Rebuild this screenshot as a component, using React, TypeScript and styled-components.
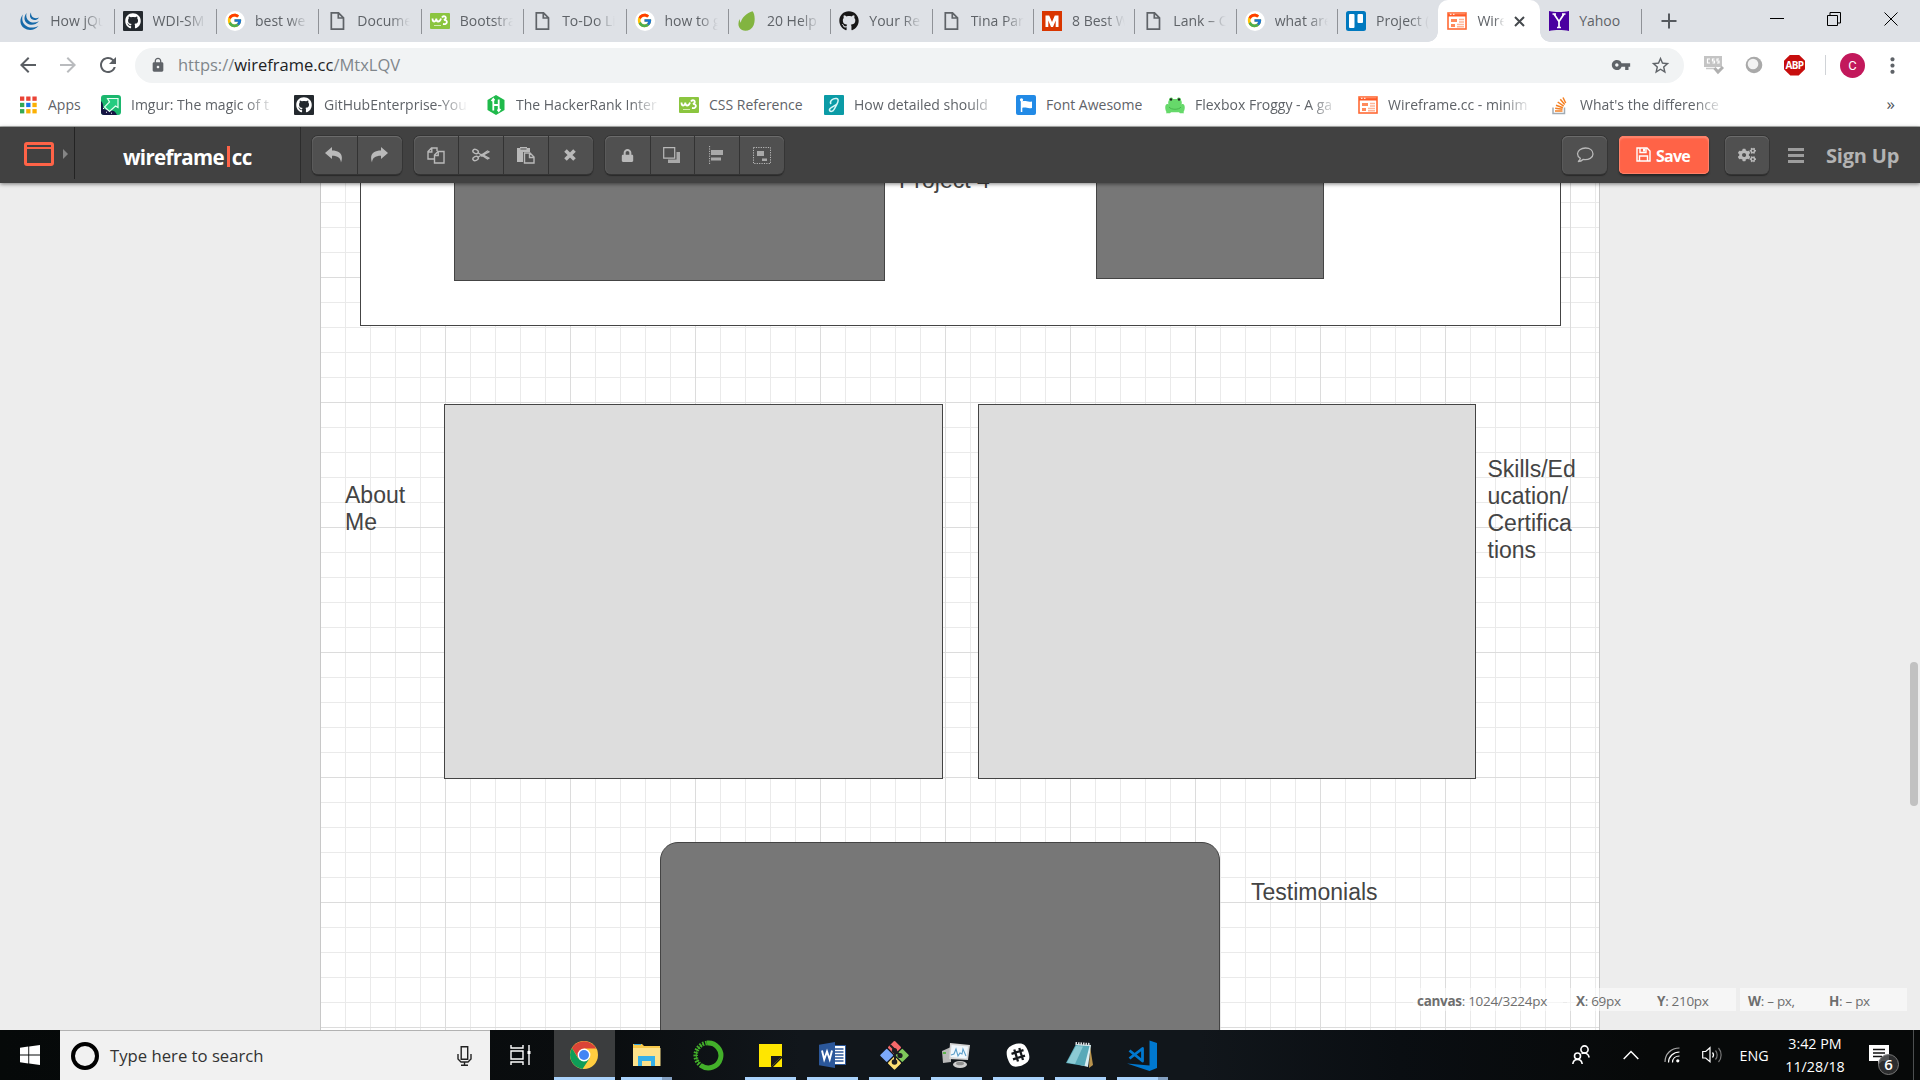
import React from "react";
import styled, { createGlobalStyle, css } from "styled-components";
import { FcGoogle } from "react-icons/fc";
import { FaGithub, FaCogs, FaLock } from "react-icons/fa";
import { MdArrowBack, MdArrowForward, MdRefresh, MdLock, MdVpnKey, MdStarBorder, MdMoreVert } from "react-icons/md";

const ui = `"Segoe UI", "Open Sans", "Noto Sans", sans-serif`;

const Global = createGlobalStyle`
  * { box-sizing: border-box; }
  body { margin: 0; overflow: hidden; font-family: ${ui}; }
  svg { display: block; flex: none; }
`;

const Screen = styled.div`
  width: 1920px;
  height: 1080px;
  display: flex;
  flex-direction: column;
  overflow: hidden;
  background: #ededed;
`;

/* ---------- browser tabs ---------- */
const TabStrip = styled.div`
  height: 42px;
  flex: none;
  display: flex;
  background: #dee1e6;
  padding-left: 11.2px;
`;
const Tab = styled.div<{ $active?: boolean; $line?: boolean; $w?: number }>`
  width: ${(p) => p.$w ?? 101.8}px;
  flex: none;
  height: 42px;
  display: flex;
  align-items: center;
  padding-left: 9px;
  position: relative;
  ${(p) =>
    p.$line &&
    css`
      &::after {
        content: "";
        position: absolute;
        right: -1px;
        top: 9px;
        width: 1px;
        height: 25px;
        background: #8f9297;
      }
    `}
  ${(p) =>
    p.$active &&
    css`
      background: #fff;
      border-radius: 10px 10px 0 0;
      &::before,
      &::after {
        content: "";
        position: absolute;
        bottom: 0;
        width: 10px;
        height: 10px;
      }
      &::before {
        left: -10px;
        background: radial-gradient(circle at 0 0, transparent 9.5px, #fff 10px);
      }
      &::after {
        right: -10px;
        background: radial-gradient(circle at 100% 0, transparent 9.5px, #fff 10px);
      }
    `}
`;
const IconSlot = styled.span`
  width: 20px;
  height: 20px;
  flex: none;
  display: flex;
  align-items: center;
  justify-content: center;
`;
const TabTitle = styled.span<{ $w?: number; $plain?: boolean }>`
  width: ${(p) => p.$w ?? 54}px;
  margin-left: 10px;
  overflow: hidden;
  white-space: nowrap;
  font-size: 14px;
  line-height: 20px;
  color: #5f6368;
  ${(p) => !p.$plain && "mask-image: linear-gradient(to right, #000 62%, transparent 98%);"}
`;
const CloseTab = styled.span`
  width: 11px;
  height: 11px;
  margin-left: 9px;
`;
const NewTab = styled.div`
  width: 56px;
  display: flex;
  align-items: center;
  justify-content: center;
`;
const WindowButtons = styled.div`
  margin-left: auto;
  display: flex;
  height: 37px;
  align-items: center;
  gap: 43px;
  padding-right: 22px;
`;

/* ---------- address row ---------- */
const AddressRow = styled.div`
  height: 44px;
  flex: none;
  display: flex;
  align-items: center;
  background: #fff;
  padding: 2px 0 0 16px;
`;
const NavIcons = styled.div`
  display: flex;
  gap: 16px;
  width: 119px;
  svg { width: 24px; height: 24px; }
`;
const Omnibox = styled.div`
  width: 1549px;
  height: 35px;
  border-radius: 18px;
  background: #f1f3f4;
  display: flex;
  align-items: center;
  padding: 0 13px 0 15px;
`;
const Url = styled.span`
  flex: 1;
  margin-left: 12px;
  font-size: 16.5px;
  line-height: 22px;
  color: #80868b;
  b { font-weight: 400; color: #202124; }
`;
const OmniActions = styled.div`
  display: flex;
  gap: 19px;
`;
const Extensions = styled.div`
  display: flex;
  align-items: center;
  margin-left: 20px;
  gap: 20px;
`;
const Abp = styled.span`
  width: 21px;
  height: 21px;
  background: #c70d0d;
  clip-path: polygon(30% 0, 70% 0, 100% 30%, 100% 70%, 70% 100%, 30% 100%, 0 70%, 0 30%);
  color: #fff;
  font: 700 10px/21px ${ui};
  letter-spacing: -0.6px;
  text-align: center;
`;
const Rule = styled.span`
  width: 1px;
  height: 20px;
  margin: 0 -6px 0 0;
  background: #d0d3d7;
`;
const Avatar = styled.span`
  width: 25px;
  height: 25px;
  border-radius: 50%;
  background: #c2185b;
  color: #fff;
  font: 400 13px/25px Roboto, sans-serif;
  text-align: center;
`;
const MenuDots = styled(MdMoreVert)`
  margin-left: -5px;
`;

/* ---------- bookmarks ---------- */
const Bookmarks = styled.div`
  height: 41px;
  flex: none;
  display: flex;
  align-items: center;
  background: #fff;
  border-bottom: 1px solid #b4b7b4;
  padding: 0 0 2px 18px;
`;
const Bookmark = styled.div<{ $w: number }>`
  width: ${(p) => p.$w}px;
  flex: none;
  display: flex;
  align-items: center;
`;
const BookmarkText = styled.span<{ $fade?: boolean }>`
  margin-left: 10px;
  max-width: 143px;
  overflow: hidden;
  white-space: nowrap;
  font-size: 14px;
  line-height: 20px;
  color: #5f6368;
  ${(p) => p.$fade && "mask-image: linear-gradient(to right, #000 114px, transparent 144px);"}
`;
const More = styled.span`
  margin: -4px 25px 0 auto;
  font-size: 17px;
  color: #50545a;
`;

/* ---------- wireframe header ---------- */
const Header = styled.header`
  height: 56px;
  flex: none;
  display: flex;
  align-items: center;
  background: #414141;
  position: relative;
  z-index: 3;
  box-shadow: 0 1px 4px rgba(0, 0, 0, 0.5);
`;
const LogoCell = styled.div`
  width: 75px;
  height: 52px;
  align-self: flex-start;
  border-right: 1px solid #232323;
  display: flex;
  align-items: center;
  padding: 2px 0 0 23.5px;
  gap: 9px;
`;
const Brand = styled.div`
  width: 226px;
  height: 56px;
  border-right: 1px solid #2c2c2c;
  display: flex;
  align-items: center;
  padding: 3px 0 0 48px;
  color: #fff;
  font-size: 20.5px;
  font-weight: 700;
  letter-spacing: -0.7px;
  line-height: 26px;
`;
const BrandBar = styled.i`
  width: 3px;
  height: 21px;
  margin: 0 2px 0 3px;
  background: #ff6347;
`;
const Group = styled.div<{ $left: number }>`
  margin-left: ${(p) => p.$left}px;
  height: 38px;
  display: flex;
  border-radius: 6px;
  background: #505050;
  box-shadow: inset 0 1px 0 #6b6b6b, inset 1px 0 0 #5a5a5a, 0 0 0 1px #353535, 0 2px 1px #2a2a2a;
`;
const ToolButton = styled.button<{ $w?: number }>`
  width: ${(p) => p.$w ?? 44.8}px;
  height: 38px;
  padding: 0;
  border: 0;
  background: none;
  color: #b9b9b9;
  display: flex;
  align-items: center;
  justify-content: center;
  & + & { border-left: 1px solid #333; padding-right: 1px; }
`;
const Save = styled.button`
  width: 90px;
  height: 38px;
  margin-left: 12px;
  padding: 2px 2px 0 0;
  border: 0;
  border-radius: 5px;
  background: #ff6347;
  box-shadow: inset 0 0 0 1px #ff8068, inset 0 2px 2px #ff8e78, 0 2px 2px #252525;
  display: flex;
  align-items: center;
  justify-content: center;
  gap: 5px;
  color: #fff;
  font: 700 16px/20px ${ui};
  letter-spacing: -0.7px;
  svg { margin-top: -3px; }
`;
const SignUp = styled.span`
  width: 94px;
  margin: 2px 0 0 22px;
  color: #b3b3b3;
  font-size: 20px;
  font-weight: 700;
  letter-spacing: -0.2px;
  line-height: 24px;
`;
const Burger = styled.span`
  width: 16px;
  height: 15px;
  margin-left: 19px;
  border-top: 3px solid #9d9d9d;
  border-bottom: 3px solid #9d9d9d;
  display: flex;
  align-items: center;
  &::before { content: ""; width: 16px; height: 3px; background: #9d9d9d; }
`;
const Spacer = styled.span`
  flex: 1;
`;

/* ---------- canvas ---------- */
const Workspace = styled.main`
  flex: 1;
  position: relative;
  display: flex;
  justify-content: center;
  overflow: hidden;
  background: #ededed;
`;
const Page = styled.section`
  width: 1280px;
  height: 100%;
  position: relative;
  background-color: #fff;
  background-image: linear-gradient(to right, #dcdcdc 1px, transparent 1px),
    linear-gradient(to bottom, #dcdcdc 1px, transparent 1px),
    linear-gradient(to right, #eaeaea 1px, transparent 1px),
    linear-gradient(to bottom, #eaeaea 1px, transparent 1px);
  background-size: 125px 125px, 125px 125px, 25px 25px, 25px 25px;
  background-position: 0 94px, 0 94px, 0 19px, 0 19px;
  box-shadow: inset 1px 0 0 #c8c8c8, inset -1px 0 0 #c8c8c8;
`;
const Shape = styled.div<{ $x: number; $y: number; $w: number; $h: number; $fill: string; $r?: number }>`
  position: absolute;
  left: ${(p) => p.$x}px;
  top: ${(p) => p.$y}px;
  width: ${(p) => p.$w}px;
  height: ${(p) => p.$h}px;
  background: ${(p) => p.$fill};
  border: 1px solid #444;
  border-radius: ${(p) => p.$r ?? 0}px;
`;
const Note = styled.div<{ $x: number; $y: number; $w: number }>`
  position: absolute;
  left: ${(p) => p.$x}px;
  top: ${(p) => p.$y}px;
  width: ${(p) => p.$w}px;
  color: #444;
  font: 23px/27px Arial, "Liberation Sans", sans-serif;
  white-space: pre;
`;
const ScrollThumb = styled.div`
  position: absolute;
  right: 2px;
  top: 479px;
  width: 8px;
  height: 144px;
  border-radius: 4px;
  background: #c1c1c1;
`;
const StatusBar = styled.div`
  position: absolute;
  right: 13px;
  bottom: 19px;
  height: 23px;
  display: flex;
  gap: 4px;
  color: #6e6e6e;
  font-size: 13.5px;
  letter-spacing: -0.3px;
  line-height: 27px;
`;
const StatusBox = styled.div<{ $w: number; $pad: number }>`
  width: ${(p) => p.$w}px;
  padding-left: ${(p) => p.$pad}px;
  display: flex;
  white-space: nowrap;
  background: rgba(255, 255, 255, 0.5);
`;
const Stat = styled.span<{ $w?: number }>`
  width: ${(p) => (p.$w ? p.$w + "px" : "auto")};
`;

/* ---------- taskbar ---------- */
const Taskbar = styled.footer`
  height: 50px;
  flex: none;
  display: flex;
  background: linear-gradient(to right, #060909 0, #0a0d0f 600px, #11161b 800px, #11161b 1200px, #0a0e12 1400px, #070909 1650px);
  color: #fff;
`;
const Start = styled.div`
  width: 60px;
  display: flex;
  align-items: center;
  justify-content: center;
`;
const Search = styled.div`
  width: 430px;
  background: #f1f1f1;
  border-top: 1px solid #b2b2b2;
  display: flex;
  align-items: center;
  padding: 0 18px 0 11px;
`;
const Cortana = styled.span`
  width: 28px;
  height: 28px;
  border-radius: 50%;
  border: 4px solid #000;
`;
const SearchText = styled.span`
  flex: 1;
  margin-left: 11px;
  font-size: 16.7px;
  color: #333;
`;
const TaskView = styled.div`
  width: 64px;
  display: flex;
  align-items: center;
  padding-left: 19.5px;
`;
const Task = styled.div<{ $state?: "active" | "open" | "stack" }>`
  width: 62px;
  display: flex;
  align-items: center;
  justify-content: center;
  padding-right: 2px;
  position: relative;
  ${(p) =>
    p.$state === "active" &&
    css`
      background: linear-gradient(to right, #3b3d3e 61px, transparent 61px);
    `}
  ${(p) =>
    p.$state &&
    css`
      &::after {
        content: "";
        position: absolute;
        bottom: 0;
        height: 3px;
        left: ${p.$state === "active" ? 0 : 5}px;
        width: ${p.$state === "active" ? 61 : 51}px;
        background: ${p.$state === "stack"
          ? "linear-gradient(to right, #a9d2fb 41px, #839fc0 41px)"
          : "#a9d2fb"};
      }
    `}
`;
const Tray = styled.div`
  margin-left: auto;
  display: flex;
  align-items: center;
  padding-right: 6px;
`;
const TrayItem = styled.div<{ $w: number; $shift?: number }>`
  width: ${(p) => p.$w}px;
  padding-left: ${(p) => p.$shift ?? 0}px;
  display: flex;
  justify-content: center;
  text-align: center;
  font-size: 14.3px;
  line-height: 23px;
`;
const Notice = styled.div`
  width: 60px;
  height: 50px;
  position: relative;
  border-right: 1px solid #4c4f50;
  display: flex;
  align-items: center;
  padding-left: 15px;
`;
const Count = styled.span`
  position: absolute;
  left: 24px;
  top: 24px;
  width: 21px;
  height: 21px;
  border: 1px solid #777;
  border-radius: 50%;
  background: rgba(50, 52, 53, 0.85);
  font: 600 15px/18px ${ui};
  text-align: center;
`;

/* ---------- favicons ---------- */
const JQuery = () => (
  <svg width="20" height="20" viewBox="0 0 20 20" fill="#1669a8">
    <path d="M2.800 3.500C-1 9 0 14 4 17c4.500 3 10.500 2.500 14.500-2C13 17.500 8 17 5 14 2 11 1.800 7.500 2.800 3.500z" />
    <path d="M6.500 2C3.500 6 4 10 7 12.300c3.500 2.500 8.500 2 12-2C15 12 11.500 12 9 10 6.500 8 5.800 5.500 6.500 2z" />
    <path d="M11 1.500c-1.800 3-1 5.500 1 6.800 2.300 1.400 5 .9 7-1.800-2.200 1-4 1-5.700 0C11.700 5.500 10.900 4 11 1.500z" />
  </svg>
);
const GitHubBox = () => (
  <svg width="20" height="20" viewBox="0 0 20 20">
    <rect width="20" height="20" rx="1" fill="#24292e" />
    <FaGithub x="2" y="2" width="16" height="16" color="#fff" />
  </svg>
);
const GoogleDot = () => (
  <svg width="20" height="20" viewBox="0 0 20 20">
    <circle cx="10" cy="10" r="10" fill="#fff" />
    <FcGoogle x="1.500" y="1.500" width="17" height="17" />
  </svg>
);
const Doc = () => (
  <svg width="20" height="20" viewBox="0 0 20 20" fill="none" stroke="#5f6368" strokeWidth="1.700">
    <path d="M4.300 1.800h7.200l5 5v11.400H4.300zM11.300 2v5h5" />
  </svg>
);
const W3 = () => (
  <svg width="20" height="20" viewBox="0 0 20 20">
    <rect y="2" width="20" height="16" rx="1" fill="#8bc53f" />
    <path d="M2.500 7.500c0 4 3.500 4 3.800 0 0 4 3.500 4 4.700 0M12 6.500c1-2 5-1.500 3.500 1.500l-1.500 1c4-.5 4 5-1 4" fill="none" stroke="#fff" strokeWidth="1.800" />
    <path d="M4 14.500h7" stroke="#d5ecb5" strokeWidth="1" />
  </svg>
);
const Envato = () => (
  <svg width="20" height="20" viewBox="0 0 20 20">
    <path d="M15.500.3c2.300 2 3 9.700 1 14.200-2 4.500-7.500 6.500-11.500 4.500C.5 16.500 1 12 2.500 8c.4 1.500.5 2.500 1.300 3.700C4.500 7 10 1.500 15.500.3z" fill="#82b440" />
  </svg>
);
const MBox = () => (
  <svg width="20" height="20" viewBox="0 0 20 20">
    <rect width="20" height="20" fill="#d93600" />
    <path d="M3.500 16V4.500h3.700L10 11l2.800-6.500h3.700V16h-2.800V9.500L11 16H9L6.300 9.500V16z" fill="#fff" />
  </svg>
);
const Trello = () => (
  <svg width="20" height="20" viewBox="0 0 20 20">
    <rect width="20" height="20" rx="2.500" fill="#0079bf" />
    <rect x="3" y="3" width="5.500" height="14" rx="1" fill="#fff" />
    <rect x="11.500" y="3" width="5.500" height="9" rx="1" fill="#fff" />
  </svg>
);
const WireIcon = () => (
  <svg width="20" height="20" viewBox="0 0 20 20">
    <rect x="1" y="2" width="18" height="16" fill="#fff" stroke="#ff6a35" strokeWidth="1.600" />
    <path d="M1 4.300h18" stroke="#ff5a26" strokeWidth="2.400" />
    <path d="M3 3.300h1.500M6 3.300h1.500" stroke="#fff" strokeWidth="1" />
    <path d="M4 8h6v3H4zM4 13h4v3H4z" fill="#ff8a5c" />
    <path d="M12 8.500h5M12 11h5M10 13.500h7M10 15.800h7" stroke="#ffb598" strokeWidth="1.400" />
  </svg>
);
const YahooIcon = () => (
  <svg width="20" height="20" viewBox="0 0 20 20">
    <path d="M0 0c6 1.300 14 1.300 20 0v20c-6-1.300-14-1.300-20 0z" fill="#4a00a0" />
    <path d="M5 3l5 7.500L15 3M10 10v6.500M3.500 3H7M13 3h3.500M8 16.500h4" fill="none" stroke="#fff" strokeWidth="1.700" />
  </svg>
);
const AppsGrid = () => (
  <svg width="20" height="20" viewBox="0 0 20 20">
    {["#ea4335", "#ea4335", "#ea4335", "#34a853", "#1a73e8", "#fbb003", "#34a853", "#fbb003", "#fbb003"].map((c, i) => (
      <rect key={i} x={2 + (i % 3) * 6.2} y={1.500 + Math.floor(i / 3) * 6.3} width="4.300" height="4.300" fill={c} />
    ))}
  </svg>
);
const Imgur = () => (
  <svg width="20" height="20" viewBox="0 0 20 20">
    <rect width="20" height="20" rx="3" fill="#1bb76e" />
    <path d="M0 6c4 4 0 8 6 9 5 1 7-1 10 5H3a3 3 0 01-3-3z" fill="#171544" />
    <path d="M6.500 3.500h10.500v9l-2.500-1.500-6 5.500-5-4.500 5-5z" fill="#25cc80" stroke="#e7fff3" strokeWidth="1.200" />
    <path d="M2 13l1 1M5 17l1 .5M10 18l1 .3" stroke="#fff" strokeWidth="1" />
  </svg>
);
const Hacker = () => (
  <svg width="20" height="20" viewBox="0 0 20 20">
    <path d="M10 0l8.500 5v10L10 20l-8.500-5V5z" fill="#1fba4b" />
    <path d="M7.300 4.500v11M12.700 4.500v11M7 10h6M5.500 6l1.800-2 1.200 1.500M11.500 14.500l1.200 1.500 1.800-2" fill="none" stroke="#fff" strokeWidth="1.800" />
  </svg>
);
const Justin = () => (
  <svg width="20" height="20" viewBox="0 0 20 20">
    <rect width="20" height="20" rx="1" fill="#0b9ba6" />
    <path d="M7 9c-2-3 2-6 5.500-5.500 4 .7-.5 7.500-2.500 11-1 2.500-5 2.500-4.500 0C6 12.500 11 11 13.500 8.500" fill="none" stroke="#d9f6f7" strokeWidth="1.500" />
  </svg>
);
const Flag = () => (
  <svg width="20" height="20" viewBox="0 0 20 20">
    <rect width="20" height="20" rx="2" fill="#228ae6" />
    <circle cx="5.500" cy="4.800" r="1.600" fill="#fff" />
    <path d="M4.800 5h1.500v12H4.800zM6 6.500c4-1.500 5 1 10 0V13c-5 1-6-1.500-10 0z" fill="#fff" />
  </svg>
);
const Frog = () => (
  <svg width="20" height="20" viewBox="0 0 20 20">
    <path d="M4 5C4 2 7.500 2 8 4h4c.5-2 4-2 4 1 1 2 1 3 .5 4.500 3-2 4.500 3 2 7.500l.5 1.200h-4l-1-1H6l-1 1H1L1.500 17c-2.500-4.500-1-9.500 2-7.500C3 8 3 7 4 5z" fill="#66d96a" />
    <circle cx="6" cy="4.500" r="1.200" fill="#222" />
    <circle cx="14" cy="4.500" r="1.200" fill="#222" />
    <path d="M4 12c2 3 10 3 12 0" fill="none" stroke="#47b84e" />
  </svg>
);
const Stack = () => (
  <svg width="20" height="20" viewBox="0 0 20 20" fill="none">
    <path d="M3 12.500v6h11.500v-6" stroke="#a2abb3" strokeWidth="1.500" />
    <path d="M5 16h7.500M5.200 13.300l7.300.9M6 10.300l6.900 2.500M7.700 7l6 4.200M10.300 4.300l4.400 5.300M13 2.500l2.700 5.500" stroke="#f48024" strokeWidth="1.500" />
  </svg>
);

/* ---------- toolbar glyphs ---------- */
const Undo = ({ flip }: { flip?: boolean }) => (
  <svg width="18" height="16" viewBox="0 0 18 16" fill="#b9b9b9">
    <path transform={flip ? "translate(18 0) scale(-1 1)" : undefined} d="M0 6L7 0v3.500c7 0 12 3.500 9 12C15.500 11 13 8.800 7 8.800V12z" />
  </svg>
);
const CopyIcon = () => (
  <svg width="18" height="17" viewBox="0 0 18 17" fill="none" stroke="#b9b9b9" strokeWidth="1.400">
    <path d="M7.500 12H1V4.500L4.500 1H10v3M4.800 1v4H1M7.500 8L11 4.500h6V16H7.500zM11.200 4.500v4H7.500" />
  </svg>
);
const CutIcon = () => (
  <svg width="18" height="14" viewBox="0 0 18 14" fill="none" stroke="#b9b9b9" strokeWidth="1.500">
    <ellipse cx="3.600" cy="3.500" rx="2.800" ry="2" transform="rotate(20 3.600 3.500)" />
    <ellipse cx="3.600" cy="10.500" rx="2.800" ry="2" transform="rotate(-20 3.600 10.500)" />
    <path d="M6 4.700L15.500 11l1.500-.8L9.500 6M6 9.300L15.500 3l1.500.8L9 8.300" strokeWidth="1.200" />
  </svg>
);
const PasteIcon = () => (
  <svg width="18" height="17" viewBox="0 0 18 17">
    <path d="M0 1h3V0h7v1h3v4H6v10H0z" fill="#b9b9b9" />
    <path d="M3.500 2h6" stroke="#505050" />
    <path d="M7.500 6H13l4 4v6H7.500zM12.500 6v4.500H17" fill="#505050" stroke="#b9b9b9" strokeWidth="1.400" />
  </svg>
);
const CloseX = () => (
  <svg width="12" height="12" viewBox="0 0 12 12">
    <path d="M1.500 1.500l9 9M10.500 1.500l-9 9" stroke="#b9b9b9" strokeWidth="3.600" />
  </svg>
);
const Layers = () => (
  <svg width="18" height="17" viewBox="0 0 18 17">
    <path d="M5 16h12V5h-3.500v7.500H5z" fill="#a9a9a9" />
    <path d="M.7.700h11v10.500H.7z" fill="none" stroke="#b9b9b9" strokeWidth="1.200" />
  </svg>
);
const Align = () => (
  <svg width="16" height="18" viewBox="0 0 16 18">
    <path d="M.6 0v18" stroke="#b9b9b9" strokeDasharray="1.200 1.200" />
    <path d="M2 4h12v5H2zM2 11.500h10v3H2z" fill="#a9a9a9" />
  </svg>
);
const GroupIcon = () => (
  <svg width="18" height="17" viewBox="0 0 18 17">
    <path d="M.5.500h17v16H.5z" fill="none" stroke="#b9b9b9" strokeDasharray="1.200 1.200" />
    <path d="M4 4h7v5H4zM9 11.500h5V14H9z" fill="#a9a9a9" />
  </svg>
);
const Bubble = () => (
  <svg width="18" height="16" viewBox="0 0 18 16" fill="none" stroke="#b9b9b9" strokeWidth="1.300">
    <path d="M9.500 1C5 1 1.500 3.500 1.500 6.800c0 2 1.200 3.500 2.800 4.500-.3 1.500-1 2.500-2.300 3.200 2.500 0 4-.8 5-2 6 .8 10-2 10-5.500C17 3.500 14 1 9.500 1z" />
  </svg>
);
const Floppy = () => (
  <svg width="15" height="15" viewBox="0 0 15 15" fill="none" stroke="#fff" strokeWidth="1.400">
    <path d="M1 1h10l3 3v10H1zM4 1v4.500h6V1M3.500 14V9h8v5" />
    <path d="M8 1.500v3" strokeWidth="2" />
  </svg>
);

/* ---------- taskbar icons ---------- */
const Chrome = () => (
  <svg width="28" height="28" viewBox="0 0 28 28">
    <circle cx="14" cy="14" r="14" fill="#ffcd40" />
    <path d="M14 14L8.500 17.200 1.900 7A14 14 0 0126.100 7.500H14z" fill="#db4437" />
    <path d="M1.900 7A14 14 0 0012.500 27.900L19.500 17.500 14 14 8.300 17.500z" fill="#0f9d58" />
    <circle cx="14" cy="14" r="6.400" fill="#fff" />
    <circle cx="14" cy="14" r="5" fill="#4285f4" />
  </svg>
);
const Explorer = () => (
  <svg width="29" height="24" viewBox="0 0 29 24">
    <path d="M1 1h9l2 2h16v20H1z" fill="#f7c84a" />
    <path d="M1 5h27.500v18H1z" fill="#fde28b" />
    <path d="M6 13h17v10h-4v-5h-9v5H6z" fill="#35b0e8" />
    <path d="M2 1.500h7" stroke="#3aa7de" strokeWidth="1" />
  </svg>
);
const Conda = () => (
  <svg width="31" height="31" viewBox="0 0 31 31" fill="none" stroke="#43b02a">
    <path d="M14 3a12.500 12.500 0 11-6 22.500" strokeWidth="5" />
    <path d="M8.500 26A12.500 12.500 0 0114 3" strokeWidth="4.500" strokeDasharray="1.600 1.300" />
    <path d="M6 23A12 12 0 0111 4" strokeWidth="1" />
  </svg>
);
const Sticky = () => (
  <svg width="23" height="23" viewBox="0 0 23 23">
    <path d="M0 0h23v12L12 23H0z" fill="#ffe600" />
    <path d="M12 23V12h11z" fill="#1a1a1a" />
    <path d="M14 23h9v-9z" fill="#ffe600" />
  </svg>
);
const Word = () => (
  <svg width="27" height="26" viewBox="0 0 27 26">
    <path d="M14 3.500h12.500v19H14z" fill="#fff" stroke="#2b579a" />
    <path d="M16 7h8.500M16 10h8.500M16 13h8.500M16 16h8.500M16 19h8.500" stroke="#2b579a" strokeWidth="1.500" />
    <path d="M0 2.800L16 0v26L0 23.200z" fill="#2b579a" />
    <path d="M3 8.500l2.200 9L8 9.500l2.700 8L13 8.500" fill="none" stroke="#fff" strokeWidth="1.900" />
  </svg>
);
const Git = () => (
  <svg width="31" height="31" viewBox="0 0 31 31">
    <g transform="rotate(45 15.500 15.500)">
      <rect x="5" y="5" width="9.800" height="9.800" rx="1" fill="#f5696b" />
      <rect x="16" y="5" width="9.800" height="9.800" rx="1" fill="#7fc95b" />
      <rect x="5" y="16" width="9.800" height="9.800" rx="1" fill="#7ba9fb" />
      <rect x="16" y="16" width="9.800" height="9.800" rx="1" fill="#ffdf73" />
    </g>
    <path d="M11 5l5 5v12M16 10l5 5.500" stroke="#1d1d20" strokeWidth="2" fill="none" />
    <circle cx="15.500" cy="10.500" r="2.600" fill="#1d1d20" />
    <circle cx="21" cy="15.500" r="2.600" fill="#1d1d20" />
    <circle cx="15.500" cy="22" r="2.800" fill="#1d1d20" />
  </svg>
);
const Monitor = () => (
  <svg width="29" height="27" viewBox="0 0 29 27">
    <path d="M0 9l9-4v15l-8 1z" fill="#b9b9b9" />
    <path d="M1 10h3v2H1z" fill="#5db44a" />
    <path d="M8 1l20 2-2 15-19-1z" fill="#d5d5d5" />
    <path d="M9.500 3l16.500 1.500-1.500 12L8.500 15z" fill="#f1f8fd" />
    <path d="M9 13l3-1 2-5 2 7 2-3 2 1 1-5 3 7" fill="none" stroke="#5d9fca" strokeWidth="1.100" />
    <ellipse cx="18" cy="22.500" rx="7" ry="3.500" fill="#cfcfcf" />
    <ellipse cx="18" cy="21.500" rx="4" ry="1.800" fill="#8f8f8f" />
  </svg>
);
const Slack = () => (
  <svg width="24" height="24" viewBox="0 0 24 24">
    <path d="M8 1.500C16-1 19.500 1 22 8c3 8 1 11.500-6 14.500-8 2.500-11.500 1-14-6S0 4.500 8 1.500z" fill="#fff" />
    <path d="M8.300 6.500l3.700 12M13.300 5l3.700 12M5.500 10.800l12-3.700M7 16.300l12-3.700" stroke="#14171b" strokeWidth="2.300" />
  </svg>
);
const Notepad = () => (
  <svg width="28" height="27" viewBox="0 0 28 27">
    <path d="M24 4l3 19-4 3z" fill="#b9934d" />
    <path d="M10 2l15 1-3 22-8-2z" fill="#d9eef2" />
    <path d="M9.500 3l14 1-5 20L0 21z" fill="#58a9b8" />
    <path d="M10 4l7 .5L9 22l-8-1.500z" fill="#8ccbd5" />
    <path d="M9.500 1.500l15 1" stroke="#d8dde0" strokeWidth="3" strokeDasharray="1.500 1" />
  </svg>
);
const Code = () => (
  <svg width="31" height="31" viewBox="0 0 31 31">
    <path d="M22.500.500L30 3v25l-7.500 3L0 23.500l22.500 2z" fill="#0078d0" />
    <path d="M2.500 10.500l13 10.500V8.500L2.500 18.500" fill="none" stroke="#0078d0" strokeWidth="2.800" strokeLinejoin="round" />
  </svg>
);

const tabs: { icon: React.ReactNode; title: string }[] = [
  { icon: <JQuery />, title: "How jQu" },
  { icon: <GitHubBox />, title: "WDI-SM" },
  { icon: <GoogleDot />, title: "best we" },
  { icon: <Doc />, title: "Docume" },
  { icon: <W3 />, title: "Bootstra" },
  { icon: <Doc />, title: "To-Do Li" },
  { icon: <GoogleDot />, title: "how to g" },
  { icon: <Envato />, title: "20 Help" },
  { icon: <FaGithub size={20} color="#181717" />, title: "Your Re" },
  { icon: <Doc />, title: "Tina Par" },
  { icon: <MBox />, title: "8 Best W" },
  { icon: <Doc />, title: "Lank – C" },
  { icon: <GoogleDot />, title: "what are" },
  { icon: <Trello />, title: "Project (" },
];

const marks: { icon: React.ReactNode; text: string; w: number; fade?: boolean }[] = [
  { icon: <Imgur />, text: "Imgur: The magic of t", w: 193, fade: true },
  { icon: <GitHubBox />, text: "GitHubEnterprise-You", w: 192, fade: true },
  { icon: <Hacker />, text: "The HackerRank Inter", w: 193, fade: true },
  { icon: <W3 />, text: "CSS Reference", w: 145 },
  { icon: <Justin />, text: "How detailed should", w: 192, fade: true },
  { icon: <Flag />, text: "Font Awesome", w: 149 },
  { icon: <Frog />, text: "Flexbox Froggy - A ga", w: 193, fade: true },
  { icon: <WireIcon />, text: "Wireframe.cc - minim", w: 192, fade: true },
  { icon: <Stack />, text: "What's the difference", w: 192, fade: true },
];

export default function App() {
  return (
    <Screen>
      <Global />
      <TabStrip>
        {tabs.map((t, i) => (
          <Tab key={i} $w={i < 8 ? 102.4 : 101.35} $line={i < tabs.length - 1}>
            <IconSlot>{t.icon}</IconSlot>
            <TabTitle>{t.title}</TabTitle>
          </Tab>
        ))}
        <Tab $active>
          <IconSlot><WireIcon /></IconSlot>
          <TabTitle $w={28}>Wire</TabTitle>
          <CloseTab>
            <svg width="11" height="11" viewBox="0 0 11 11">
              <path d="M1 1l9 9M10 1l-9 9" stroke="#45494d" strokeWidth="2" />
            </svg>
          </CloseTab>
        </Tab>
        <Tab $line $w={101}>
          <IconSlot><YahooIcon /></IconSlot>
          <TabTitle $plain>Yahoo</TabTitle>
        </Tab>
        <NewTab>
          <svg width="16" height="16" viewBox="0 0 16 16">
            <path d="M8 .500v15M.5 8h15" stroke="#55595e" strokeWidth="2" />
          </svg>
        </NewTab>
        <WindowButtons>
          <svg width="14" height="14" viewBox="0 0 14 14"><path d="M0 6.500h14" stroke="#000" /></svg>
          <svg width="14" height="14" viewBox="0 0 14 14" fill="none" stroke="#000">
            <path d="M.5 3.500h10v10H.5zM3 3V.500h10.500v10.500H11" />
          </svg>
          <svg width="14" height="14" viewBox="0 0 14 14"><path d="M.5.500l13 13M13.500.500l-13 13" stroke="#000" /></svg>
        </WindowButtons>
      </TabStrip>

      <AddressRow>
        <NavIcons>
          <MdArrowBack color="#5a5e63" />
          <MdArrowForward color="#b9bbbe" />
          <MdRefresh color="#5a5e63" />
        </NavIcons>
        <Omnibox>
          <MdLock size={16} color="#5f6368" />
          <Url>https://<b>wireframe.cc</b>/MtxLQV</Url>
          <OmniActions>
            <MdVpnKey size={20} color="#5f6368" />
            <MdStarBorder size={21} color="#5f6368" />
          </OmniActions>
        </Omnibox>
        <Extensions>
          <svg width="20" height="20" viewBox="0 0 20 20">
            <path d="M0 1h18v11H0z" fill="#c4c4c4" />
            <path d="M6 4H3.500v4H6M10.500 4H8.500v2h2v2h-2M15 4h-2v2h2v2h-2" fill="none" stroke="#fff" strokeWidth="1.200" />
            <path d="M2 13.500h9" stroke="#c9c9c9" strokeWidth="1.500" />
            <path d="M10.500 13l3.500 4 5-5" fill="none" stroke="#b0b0b0" strokeWidth="3" />
          </svg>
          <svg width="20" height="20" viewBox="0 0 20 20">
            <circle cx="10" cy="10" r="8.300" fill="#a9a9a9" />
            <circle cx="9" cy="9" r="5.300" fill="#f2f2f2" />
          </svg>
          <Abp>ABP</Abp>
          <Rule />
          <Avatar>C</Avatar>
          <MenuDots size={25} color="#5f6368" />
        </Extensions>
      </AddressRow>

      <Bookmarks>
        <Bookmark $w={83}>
          <AppsGrid />
          <BookmarkText>Apps</BookmarkText>
        </Bookmark>
        {marks.map((m) => (
          <Bookmark key={m.text} $w={m.w}>
            {m.icon}
            <BookmarkText $fade={m.fade}>{m.text}</BookmarkText>
          </Bookmark>
        ))}
        <More>»</More>
      </Bookmarks>

      <Header>
        <LogoCell>
          <svg width="30" height="24" viewBox="0 0 30 24" fill="none" stroke="#ff6347">
            <rect x="1.500" y="1.500" width="27" height="21" rx="1.500" strokeWidth="3" />
            <path d="M2 6h26" strokeWidth="2" />
            <path d="M3 4h2M6 4h1M8.500 4h1" stroke="#414141" strokeWidth="1.500" />
          </svg>
          <svg width="5" height="10" viewBox="0 0 5 10"><path d="M0 0l5 5-5 5z" fill="#858585" /></svg>
        </LogoCell>
        <Brand>wireframe<BrandBar />cc</Brand>
        <Group $left={11}>
          <ToolButton><Undo /></ToolButton>
          <ToolButton><Undo flip /></ToolButton>
        </Group>
        <Group $left={12}>
          <ToolButton><CopyIcon /></ToolButton>
          <ToolButton><CutIcon /></ToolButton>
          <ToolButton><PasteIcon /></ToolButton>
          <ToolButton><CloseX /></ToolButton>
        </Group>
        <Group $left={12}>
          <ToolButton><FaLock size={13} /></ToolButton>
          <ToolButton><Layers /></ToolButton>
          <ToolButton><Align /></ToolButton>
          <ToolButton><GroupIcon /></ToolButton>
        </Group>
        <Spacer />
        <Group $left={0}>
          <ToolButton><Bubble /></ToolButton>
        </Group>
        <Save><Floppy />Save</Save>
        <Group $left={16}>
          <ToolButton $w={44}><FaCogs size={18} /></ToolButton>
        </Group>
        <Burger />
        <SignUp>Sign Up</SignUp>
      </Header>

      <Workspace>
        <Page>
          <Shape $x={40} $y={-60} $w={1201} $h={203} $fill="#fff" />
          <Shape $x={134} $y={-60} $w={431} $h={158} $fill="#777" />
          <Shape $x={776} $y={-60} $w={228} $h={156} $fill="#777" />
          <Note $x={579} $y={-16} $w={120}>Project 4</Note>
          <Shape $x={124} $y={221} $w={499} $h={375} $fill="#ddd" />
          <Shape $x={658} $y={221} $w={498} $h={375} $fill="#ddd" />
          <Note $x={25} $y={299} $w={80}>{"About\nMe"}</Note>
          <Note $x={1167.5} $y={273} $w={92}>{"Skills/Ed\nucation/\nCertifica\ntions"}</Note>
          <Shape $x={340} $y={659} $w={560} $h={260} $fill="#777" $r={18} />
          <Note $x={931} $y={696} $w={180}>Testimonials</Note>
        </Page>
        <ScrollThumb />
        <StatusBar>
          <StatusBox $w={150} $pad={4}>
            <Stat><b>canvas</b>: 1024/3224px</Stat>
          </StatusBox>
          <StatusBox $w={169} $pad={9}>
            <Stat $w={81}><b>X</b>: 69px</Stat>
            <Stat><b>Y</b>: 210px</Stat>
          </StatusBox>
          <StatusBox $w={167} $pad={8}>
            <Stat $w={81}><b>W</b>: – px,</Stat>
            <Stat><b>H</b>: – px</Stat>
          </StatusBox>
        </StatusBar>
      </Workspace>

      <Taskbar>
        <Start>
          <svg width="20" height="20" viewBox="0 0 20 20" fill="#fff">
            <path d="M0 2.800L8.300 1.600v8H0zM9.200 1.500L20 0v9.600H9.200zM0 10.500h8.300v8L0 17.300zM9.200 10.500H20V20L9.200 18.600z" />
          </svg>
        </Start>
        <Search>
          <Cortana />
          <SearchText>Type here to search</SearchText>
          <svg width="15" height="20" viewBox="0 0 15 20" fill="none" stroke="#222" strokeWidth="1.400">
            <path d="M4.200.700h6.500v12.500H4.200zM1 8v5l3 3h7l3-3V8M7.500 16v3M4 19.200h7" />
          </svg>
        </Search>
        <TaskView>
          <svg width="21" height="20" viewBox="0 0 21 20" fill="none" stroke="#fff" strokeWidth="1.400">
            <path d="M1 0v3h12V0M1 6h12v8H1zM1 20v-3h12v3M19 0v20" />
            <path d="M17.500 6h3v3h-3z" fill="#fff" stroke="none" />
          </svg>
        </TaskView>
        <Task $state="active"><Chrome /></Task>
        <Task $state="stack"><Explorer /></Task>
        <Task><Conda /></Task>
        <Task $state="open"><Sticky /></Task>
        <Task $state="open"><Word /></Task>
        <Task $state="open"><Git /></Task>
        <Task $state="open"><Monitor /></Task>
        <Task $state="open"><Slack /></Task>
        <Task $state="open"><Notepad /></Task>
        <Task $state="stack"><Code /></Task>
        <Tray>
          <TrayItem $w={48}>
            <svg width="18" height="20" viewBox="0 0 18 20" fill="none" stroke="#fff" strokeWidth="1.600">
              <circle cx="12.500" cy="4.500" r="3.600" />
              <path d="M9.500 8.500c4-1.500 7 .5 7.700 4" />
              <circle cx="5.500" cy="11" r="3" />
              <path d="M.8 19c.7-6 8.700-6 9.400 0" />
            </svg>
          </TrayItem>
          <TrayItem $w={52}>
            <svg width="16" height="10" viewBox="0 0 16 10" fill="none" stroke="#fff" strokeWidth="1.500"><path d="M.7 9L8 1.500 15.300 9" /></svg>
          </TrayItem>
          <TrayItem $w={30}>
            <svg width="16" height="16" viewBox="0 0 16 16" fill="none" stroke="#fff" strokeWidth="1.200">
              <path d="M1 15C1 7 7 1 15.500 1" stroke="#aaa" />
              <path d="M4.500 15.500c0-6 5-10.500 11-10.500M8.500 15.500c0-4 3-6.500 7-6.500" />
              <circle cx="13.800" cy="13.800" r="1.600" fill="#fff" stroke="none" />
            </svg>
          </TrayItem>
          <TrayItem $w={50}>
            <svg width="21" height="18" viewBox="0 0 21 18" fill="none" stroke="#fff" strokeWidth="1.200">
              <path d="M.7 5.500h3L8 1.700v14L3.700 12h-3zM10.500 6.500c1.300 1.500 1.300 3.500 0 5" />
              <path d="M13.500 4.500c2.200 2.500 2.200 6.500 0 9M16.500 2c3.500 4 3.500 10 0 14" stroke="#777" />
            </svg>
          </TrayItem>
          <TrayItem $w={34}>ENG</TrayItem>
          <TrayItem $w={83} $shift={5}>3:42 PM<br />11/28/18</TrayItem>
          <Notice>
            <svg width="20" height="20" viewBox="0 0 20 20">
              <path d="M0 0h20v16H13l-4 4v-4H0z" fill="#fff" />
              <path d="M4 4.500h12M4 8h12M4 11.500h9" stroke="#111" strokeWidth="1.300" />
            </svg>
            <Count>6</Count>
          </Notice>
        </Tray>
      </Taskbar>
    </Screen>
  );
}
